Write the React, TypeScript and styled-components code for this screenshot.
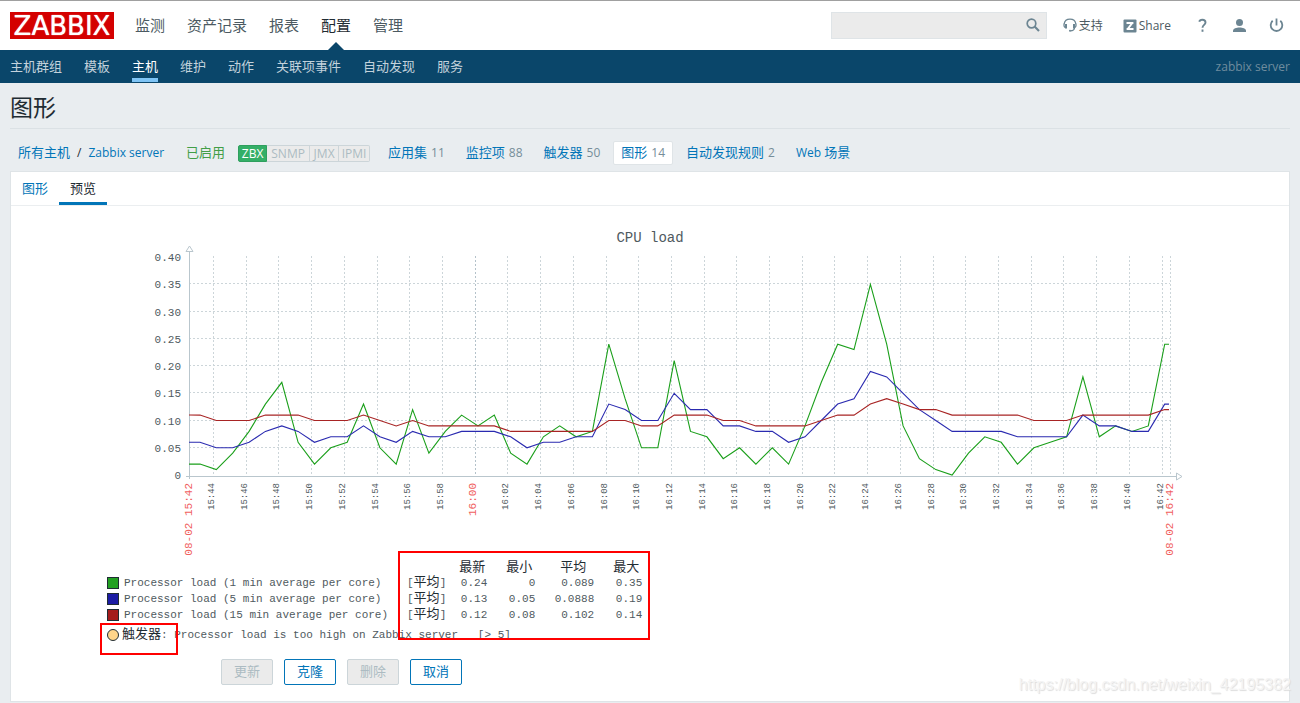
import React from "react";
import styled, { createGlobalStyle, css } from "styled-components";

const sans = `"Liberation Sans", "Noto Sans CJK SC", sans-serif`;
const ui = `"Open Sans", "Noto Sans CJK SC", sans-serif`;
const mono = `"Liberation Mono", "Noto Sans CJK SC", monospace`;

const GlobalStyle = createGlobalStyle`
  * { box-sizing: border-box; }
  body {
    margin: 0;
    background: #e9edf0;
    color: #1f2c33;
    font: 13px/18px ${sans};
  }
  a { color: #0275b8; text-decoration: none; }
`;

/* ---------- header ---------- */

const TopBar = styled.header`
  display: flex;
  align-items: center;
  height: 50px;
  padding: 0 10px;
  border-top: 1px solid #a0a0a0;
  background: #fff;
`;

const Logo = styled.a`
  width: 104px;
  height: 27px;
  flex: none;
  background: #d40000;
  color: #fff;
  font: 26px/28px "DejaVu Sans", sans-serif;
  text-align: center;
  text-shadow: 0 0 1px #fff;
`;

const MainNav = styled.nav`
  display: flex;
  gap: 22px;
  margin-left: 21px;
  align-self: stretch;
`;

const MainLink = styled.a<{ $active?: boolean }>`
  position: relative;
  color: ${(p) => (p.$active ? "#1f2c33" : "#4c5a62")};
  font-size: 15px;
  line-height: 49px;
  white-space: nowrap;
  ${(p) =>
    p.$active &&
    css`
      &::after {
        content: "";
        position: absolute;
        left: 50%;
        bottom: 0;
        margin-left: -8px;
        border: 8px solid transparent;
        border-top: 0;
        border-bottom-color: #0a466a;
      }
    `}
`;

const Tools = styled.div`
  display: flex;
  align-items: center;
  margin-left: auto;
  padding-right: 5px;
`;

const ToolLinks = styled.div`
  display: flex;
  gap: 20px;
  margin-right: 3px;
`;

const SearchBox = styled.form`
  display: flex;
  align-items: center;
  width: 216px;
  height: 27px;
  margin-right: 16px;
  border: 1px solid #dfe4e7;
  background: #ebebeb;
`;

const SearchInput = styled.input`
  flex: 1;
  min-width: 0;
  height: 25px;
  border: 0;
  padding: 0 6px;
  background: transparent;
  font: inherit;
  outline: none;
`;

const IconButton = styled.button`
  display: flex;
  border: 0;
  padding: 0 5px;
  background: none;
  cursor: pointer;
`;

const ToolLink = styled.a`
  display: flex;
  align-items: center;
  gap: 2px;
  color: #4c5a62;
  font-size: 12px;
  white-space: nowrap;
`;

const ToolText = styled.span`
  font: 12px/18px ${ui};
`;

const IconLink = styled.a`
  display: flex;
  margin-left: 21px;
`;

const SubBar = styled.nav`
  display: flex;
  gap: 22px;
  height: 33px;
  padding: 0 10px;
  background: #0a466a;
`;

const SubLink = styled.a<{ $active?: boolean }>`
  height: 32px;
  border-bottom: 4px solid ${(p) => (p.$active ? "#7fc4f5" : "transparent")};
  color: ${(p) => (p.$active ? "#fff" : "#c3d2dc")};
  line-height: 34px;
  white-space: nowrap;
`;

const ServerName = styled.span`
  margin-left: auto;
  color: #6f8c9e;
  font: 12px/34px ${ui};
`;

/* ---------- page ---------- */

const Main = styled.main`
  padding: 0 10px 1px;
`;

const Title = styled.h1`
  margin: 0;
  height: 46px;
  border-bottom: 1px solid #dbe1e5;
  font-size: 23px;
  font-weight: 400;
  line-height: 51px;
`;

const HostNav = styled.nav`
  display: flex;
  align-items: center;
  height: 42px;
  padding: 12px 0 6px;
  font: 12px/22px ${ui};
`;

const HostItem = styled.a<{ $active?: boolean }>`
  height: 24px;
  margin-right: 5px;
  border: 1px solid ${(p) => (p.$active ? "#dfe4e7" : "transparent")};
  border-radius: 2px;
  padding: 0 7px;
  background: ${(p) => (p.$active ? "#fff" : "transparent")};
  white-space: nowrap;
`;

const Cjk = styled.span`
  font-size: 13px;
  line-height: 18px;
`;

const Count = styled.span`
  margin-left: 4px;
  color: #768d99;
`;

const Crumbs = styled.div`
  display: flex;
  gap: 7px;
  height: 22px;
  padding-left: 8px;
  white-space: nowrap;
`;

const Enabled = styled.span`
  height: 22px;
  margin: 0 13px 0 22px;
  color: #429e47;
  font-size: 13px;
  line-height: 21px;
`;

const Interfaces = styled.div`
  display: flex;
  margin-right: 10px;
`;

const InterfaceTag = styled.span<{ $on?: boolean; $width: number }>`
  width: ${(p) => p.$width}px;
  height: 17px;
  border: 1px solid ${(p) => (p.$on ? "#2f9f5e" : "#ccd5d9")};
  border-left-width: ${(p) => (p.$on ? 1 : 0)}px;
  background: ${(p) => (p.$on ? "#34af67" : "#ebebeb")};
  color: ${(p) => (p.$on ? "#fff" : "#acbbc2")};
  font: 12px/15px ${ui};
  text-align: center;
  &:first-child { border-radius: 2px 0 0 2px; }
  &:last-child { border-radius: 0 2px 2px 0; }
`;

const Panel = styled.section`
  border: 1px solid #dfe4e7;
  background: #fff;
`;

const TabBar = styled.div`
  display: flex;
  height: 34px;
  border-bottom: 1px solid #ebeef0;
`;

const Tab = styled.a<{ $active?: boolean }>`
  height: 33px;
  padding: 0 11px;
  border-bottom: 3px solid ${(p) => (p.$active ? "#0275b8" : "transparent")};
  color: ${(p) => (p.$active ? "#1f2c33" : "#0275b8")};
  line-height: 34px;
`;

const Graph = styled.figure`
  position: relative;
  width: 100%;
  max-width: 1100px;
  margin: 0 auto;
`;

const Chart = styled.svg`
  display: block;
  width: 100%;
  height: auto;
  font-family: ${mono};
`;

const Legend = styled.table`
  margin-left: 7px;
  border-collapse: collapse;
  color: #4f5a60;
  font: 11px/15px ${mono};
  white-space: nowrap;
`;

const SeriesHead = styled.th`
  width: 300px;
  height: 15px;
  padding: 0;
  text-align: left;
  font-weight: 400;
`;

const SeriesName = styled.span`
  display: flex;
  align-items: center;
  gap: 5px;
`;

const Swatch = styled.span<{ $color: string; $round?: boolean }>`
  width: 12px;
  height: 12px;
  flex: none;
  border: 1px solid #1f2c33;
  border-radius: ${(p) => (p.$round ? 6 : 0)}px;
  background: ${(p) => p.$color};
`;

const Mode = styled.td`
  padding: 0;
`;

const Kai = styled.span`
  color: #1f2c33;
  font-size: 13px;
`;

const Value = styled.td<{ $width: number }>`
  width: ${(p) => p.$width}px;
  padding: 0;
  text-align: right;
`;

const ValueHead = styled.th<{ $inset: number }>`
  height: 15px;
  padding: 0 ${(p) => p.$inset}px 0 0;
  color: #1f2c33;
  font-size: 13px;
  font-weight: 400;
  text-align: right;
`;

const Trigger = styled.figcaption`
  display: flex;
  align-items: center;
  gap: 3px;
  margin: 4px 0 0 7px;
  color: #4f5a60;
  font: 11px/15px ${mono};
  white-space: pre;
`;

const Highlight = styled.div<{ $box: [number, number, number, number] }>`
  position: absolute;
  left: ${(p) => p.$box[0]}px;
  top: ${(p) => p.$box[1]}px;
  width: ${(p) => p.$box[2]}px;
  height: ${(p) => p.$box[3]}px;
  border: 2px solid #f00;
  pointer-events: none;
`;

const Actions = styled.div`
  display: flex;
  gap: 11px;
  padding: 16px 0 16px 210px;
`;

const Button = styled.button`
  width: 52px;
  height: 26px;
  border: 1px solid #0275b8;
  border-radius: 2px;
  padding: 0;
  background: #fff;
  color: #0275b8;
  font: 13px/24px ${sans};
  cursor: pointer;
  &:disabled {
    border-color: #ccd5d9;
    background: #ebebeb;
    color: #acbbc2;
    cursor: default;
  }
`;

const Watermark = styled.div`
  position: absolute;
  right: 9px;
  bottom: 8px;
  color: #f4f4f4;
  font: 16px/20px ${sans};
  text-shadow: 1px 1px 1px #dcdcdc;
  pointer-events: none;
`;

const Page = styled.div`
  position: relative;
  min-height: 100vh;
`;

/* ---------- data ---------- */

const mainMenu = ["监测", "资产记录", "报表", "配置", "管理"];
const subMenu = ["主机群组", "模板", "主机", "维护", "动作", "关联项事件", "自动发现", "服务"];
const hostTabs = [
  { label: "应用集", count: 11 },
  { label: "监控项", count: 88 },
  { label: "触发器", count: 50 },
  { label: "图形", count: 14, active: true },
  { label: "自动发现规则", count: 2 },
];

// Load samples in hundredths, one per minute.
const load1 = [2, 1, 4, 8, 13, 17, 6, 2, 5, 6, 13, 5, 2, 12, 4, 8, 11, 9, 11, 4, 2, 7, 9, 7, 8, 24, 14, 5, 5, 21, 8, 7, 3, 5, 2, 5, 2, 9, 17, 24, 23, 35, 24, 9, 3, 1, 0, 4, 7, 6, 2, 5, 6, 7, 18, 7, 9, 8, 9, 24];
const load5 = [6, 5, 5, 6, 8, 9, 8, 6, 7, 7, 9, 7, 6, 8, 7, 7, 8, 8, 8, 7, 5, 6, 6, 7, 7, 13, 12, 10, 10, 15, 12, 12, 9, 9, 8, 8, 6, 7, 10, 13, 14, 19, 18, 15, 12, 10, 8, 8, 8, 8, 7, 7, 7, 7, 11, 9, 9, 8, 8, 13];
const load15 = [11, 10, 10, 10, 11, 11, 11, 10, 10, 10, 11, 10, 9, 10, 9, 9, 9, 9, 9, 8, 8, 8, 8, 8, 8, 10, 10, 9, 9, 11, 11, 11, 10, 10, 9, 9, 9, 9, 10, 11, 11, 13, 14, 13, 12, 12, 11, 11, 11, 11, 11, 10, 10, 10, 11, 11, 11, 11, 11, 12];

const series = [
  { name: "Processor load (1 min average per core)", color: "#1a9f1a", fill: "#22a022", data: load1, last: "0.24", min: "0", avg: "0.089", max: "0.35" },
  { name: "Processor load (5 min average per core)", color: "#2a2ab0", fill: "#1c1ca4", data: load5, last: "0.13", min: "0.05", avg: "0.0888", max: "0.19" },
  { name: "Processor load (15 min average per core)", color: "#a82424", fill: "#a41c1c", data: load15, last: "0.12", min: "0.08", avg: "0.102", max: "0.14" },
];

const LEFT = 89;
const RIGHT = 1070;
const TOP = 51;
const BASE = 269;
const yOf = (hundredths: number) => BASE - hundredths * 5.45;
const ticks = Array.from({ length: 30 }, (_, i) => {
  const minute = 44 + i * 2;
  const label = `${minute < 60 ? 15 : 16}:${String(minute % 60).padStart(2, "0")}`;
  return { x: Math.round(113 + i * 32.71) + 0.5, label, hour: minute === 60 };
});
const pathOf = (data: number[]) => {
  const middle = data.map((v, i) => `${(100 + i * 16.35).toFixed(1)},${yOf(v).toFixed(1)}`);
  return [`${LEFT},${yOf(data[0])}`, ...middle, `1069,${yOf(data[data.length - 1])}`].join(" ");
};

const SideLabel = ({ x, size, color, children }: { x: number; size: number; color: string; children: React.ReactNode }) => (
  <text transform={`translate(${x} 277) rotate(-90)`} textAnchor="end" fontSize={size} fill={color}>
    {children}
  </text>
);

const LoadChart = () => (
  <Chart viewBox="0 0 1100 354" role="img" aria-label="CPU load">
    <text x="550" y="36" fontSize="14" textAnchor="middle" fill="#4f5a60">CPU load</text>
    {[5, 10, 15, 20, 25, 30, 35].map((v) => (
      <line key={v} x1={LEFT} x2={RIGHT} y1={Math.round(yOf(v)) - 0.5} y2={Math.round(yOf(v)) - 0.5} stroke="#ccd5d9" strokeDasharray="2 2" />
    ))}
    {ticks.map((t) => (
      <line key={t.label} x1={t.x} x2={t.x} y1={TOP - 1} y2={BASE} stroke={t.hour ? "#b4c2ca" : "#ccd5d9"} strokeDasharray="2 2" />
    ))}
    <line x1="1070.5" x2="1070.5" y1={TOP - 1} y2={BASE} stroke="#ccd5d9" strokeDasharray="2 2" />
    {[0, 5, 10, 15, 20, 25, 30, 35, 40].map((v) => (
      <text key={v} x="81" y={Math.round(yOf(v)) + 4} fontSize="11" textAnchor="end" fill="#4f5a60">
        {v ? (v / 100).toFixed(2) : "0"}
      </text>
    ))}
    <path d="M89.5 273V45M86 270.5H1076" stroke="#b9c6cd" fill="none" />
    <path d="M86 45.5L89.5 40L93 45.5ZM1076.5 267L1082 270.5L1076.5 274Z" stroke="#b9c6cd" fill="#fff" />
    {series.map((s) => (
      <polyline key={s.name} points={pathOf(s.data)} fill="none" stroke={s.color} strokeWidth="1.1" />
    ))}
    {ticks.map((t) =>
      t.hour ? (
        <SideLabel key={t.label} x={t.x} size={11} color="#f06060">{t.label}</SideLabel>
      ) : (
        <SideLabel key={t.label} x={t.x} size={9} color="#4f5a60">{t.label}</SideLabel>
      ),
    )}
    <SideLabel x={92} size={11} color="#f06060">08-02 15:42</SideLabel>
    <SideLabel x={1073} size={11} color="#f06060">08-02 16:42</SideLabel>
  </Chart>
);

const App = () => (
  <Page>
    <GlobalStyle />
    <TopBar>
      <Logo href="#">ZABBIX</Logo>
      <MainNav>
        {mainMenu.map((m) => (
          <MainLink key={m} href="#" $active={m === "配置"}>{m}</MainLink>
        ))}
      </MainNav>
      <Tools>
        <SearchBox>
          <SearchInput type="search" aria-label="搜索" />
          <IconButton type="button" aria-label="搜索">
            <svg width="16" height="16" viewBox="0 0 16 16" fill="none" stroke="#6c8592">
              <circle cx="6.5" cy="5.5" r="4.3" strokeWidth="1.7" />
              <path d="M9.6 8.6L14 13" strokeWidth="2.1" />
            </svg>
          </IconButton>
        </SearchBox>
        <ToolLinks>
          <ToolLink href="#">
            <svg width="14" height="16" viewBox="0 0 14 16" fill="none" stroke="#6c8592">
              <path d="M2 9.500C.8 8.500 1 6.500 1.200 5.800C1.600 3 4 1.200 7 1.200S12.400 3 12.800 5.800C13 6.500 13.200 8.500 12 9.500" strokeWidth="1.3" />
              <path d="M3 6V10.500M11 6V10.500" strokeWidth="2" />
              <path d="M11.500 10C11.200 12 9.700 12.800 7.500 12.800" strokeWidth="1.3" />
              <circle cx="7" cy="12.800" r="1" fill="#6c8592" stroke="none" />
            </svg>
            支持
          </ToolLink>
          <ToolLink href="#">
            <svg width="14" height="14" viewBox="0 0 14 14">
              <rect x="0.500" y="0.500" width="13" height="13" rx="1" fill="#6c8592" />
              <path d="M3.500 3.900H10.400M3.600 10.100H10.500M9.300 4L4.700 10" fill="none" stroke="#fff" strokeWidth="2" />
            </svg>
            <ToolText>Share</ToolText>
          </ToolLink>
        </ToolLinks>
        <IconLink href="#" aria-label="帮助">
          <svg width="16" height="16" viewBox="0 0 16 16" fill="none" stroke="#6c8592" strokeWidth="1.900">
            <path d="M4.300 3.800C4.700 2 5.900 1.700 7.300 1.700C9.400 1.700 10.500 2.800 10.500 4.500C10.500 6.800 7.500 7 7.500 9.700" />
            <path d="M7.500 11.500V13.800" />
          </svg>
        </IconLink>
        <IconLink href="#" aria-label="用户">
          <svg width="16" height="16" viewBox="0 0 16 16" fill="#6c8592">
            <circle cx="7.500" cy="4.500" r="3.500" />
            <path d="M1 14V12.700C1 10.500 4.500 9.500 7.500 9.500S14 10.500 14 12.700V14Z" />
          </svg>
        </IconLink>
        <IconLink href="#" aria-label="退出">
          <svg width="16" height="16" viewBox="0 0 16 16" fill="none" stroke="#6c8592" strokeWidth="1.800">
            <path d="M7.500 .5V7.500" />
            <path d="M3.700 2.800A5.800 5.800 0 1 0 11.300 2.800" />
          </svg>
        </IconLink>
      </Tools>
    </TopBar>
    <SubBar>
      {subMenu.map((m) => (
        <SubLink key={m} href="#" $active={m === "主机"}>{m}</SubLink>
      ))}
      <ServerName>zabbix server</ServerName>
    </SubBar>
    <Main>
      <Title>图形</Title>
      <HostNav>
        <Crumbs>
          <a href="#"><Cjk>所有主机</Cjk></a>
          <span>/</span>
          <a href="#">Zabbix server</a>
        </Crumbs>
        <Enabled>已启用</Enabled>
        <Interfaces>
          <InterfaceTag $on $width={29}>ZBX</InterfaceTag>
          <InterfaceTag $width={43}>SNMP</InterfaceTag>
          <InterfaceTag $width={29}>JMX</InterfaceTag>
          <InterfaceTag $width={31}>IPMI</InterfaceTag>
        </Interfaces>
        {hostTabs.map((t) => (
          <HostItem key={t.label} href="#" $active={t.active}>
            <Cjk>{t.label}</Cjk>
            <Count>{t.count}</Count>
          </HostItem>
        ))}
        <HostItem href="#">Web <Cjk>场景</Cjk></HostItem>
      </HostNav>
      <Panel>
        <TabBar>
          <Tab href="#">图形</Tab>
          <Tab href="#" $active>预览</Tab>
        </TabBar>
        <Graph>
          <LoadChart />
          <Legend>
            <thead>
              <tr>
                <SeriesHead />
                <Mode />
                <ValueHead $inset={2}>最新</ValueHead>
                <ValueHead $inset={3}>最小</ValueHead>
                <ValueHead $inset={8}>平均</ValueHead>
                <ValueHead $inset={3}>最大</ValueHead>
              </tr>
            </thead>
            <tbody>
              {series.map((s) => (
                <tr key={s.name}>
                  <SeriesHead scope="row">
                    <SeriesName><Swatch $color={s.fill} />{s.name}</SeriesName>
                  </SeriesHead>
                  <Mode>[<Kai>平均</Kai>]</Mode>
                  <Value $width={41}>{s.last}</Value>
                  <Value $width={48}>{s.min}</Value>
                  <Value $width={59}>{s.avg}</Value>
                  <Value $width={48}>{s.max}</Value>
                </tr>
              ))}
            </tbody>
          </Legend>
          <Trigger>
            <Swatch $color="#ffd58a" $round />
            <span><Kai>触发器</Kai>: Processor load is too high on Zabbix server   [&gt; 5]</span>
          </Trigger>
          <Highlight $box={[298, 345, 252, 89]} />
          <Highlight $box={[0, 417, 78, 32]} />
        </Graph>
        <Actions>
          <Button disabled>更新</Button>
          <Button>克隆</Button>
          <Button disabled>删除</Button>
          <Button>取消</Button>
        </Actions>
      </Panel>
    </Main>
    <Watermark>https://blog.csdn.net/weixin_42195382</Watermark>
  </Page>
);

export default App;
